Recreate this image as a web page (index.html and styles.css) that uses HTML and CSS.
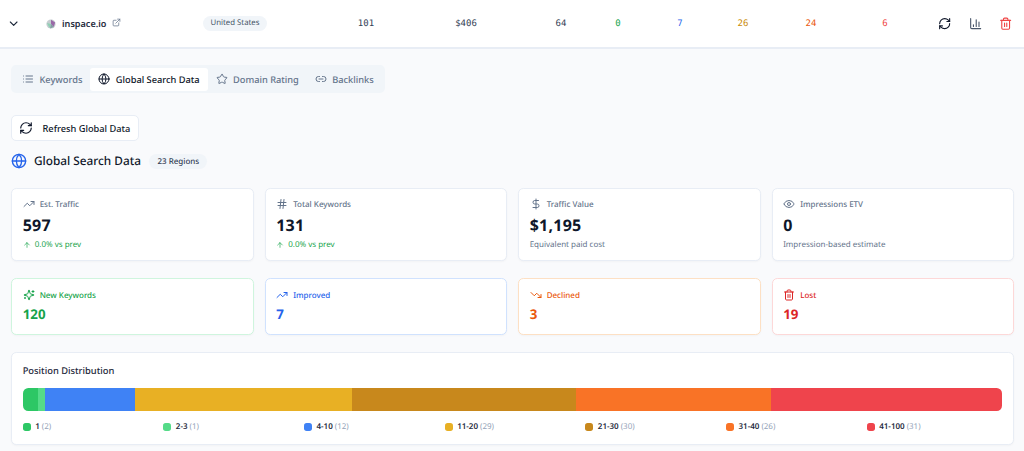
FILE: index.html
```html
<!DOCTYPE html>
<html>
<head>
    <title>inspace.io - Global Search Data</title>
    <link rel="stylesheet" href="styles.css">
</head>
<body>
    <svg class="sprite" xmlns="http://www.w3.org/2000/svg">
        <symbol id="i-chevron" viewBox="0 0 24 24"><path d="m6 9 6 6 6-6"/></symbol>
        <symbol id="i-external" viewBox="0 0 24 24"><path d="M15 3h6v6"/><path d="M10 14 21 3"/><path d="M18 13v6a2 2 0 0 1-2 2H5a2 2 0 0 1-2-2V8a2 2 0 0 1 2-2h6"/></symbol>
        <symbol id="i-refresh" viewBox="0 0 24 24"><path d="M3 12a9 9 0 0 1 9-9 9.75 9.75 0 0 1 6.74 2.74L21 8"/><path d="M21 3v5h-5"/><path d="M21 12a9 9 0 0 1-9 9 9.75 9.75 0 0 1-6.74-2.74L3 16"/><path d="M8 16H3v5"/></symbol>
        <symbol id="i-chart" viewBox="0 0 24 24"><path d="M3 3v16a2 2 0 0 0 2 2h16"/><path d="M18 17V9"/><path d="M13 17V5"/><path d="M8 17v-3"/></symbol>
        <symbol id="i-trash" viewBox="0 0 24 24"><path d="M3 6h18"/><path d="M19 6v14c0 1-1 2-2 2H7c-1 0-2-1-2-2V6"/><path d="M8 6V4c0-1 1-2 2-2h4c1 0 2 1 2 2v2"/><path d="M10 11v6"/><path d="M14 11v6"/></symbol>
        <symbol id="i-list" viewBox="0 0 24 24"><path d="M3 6h.01"/><path d="M3 12h.01"/><path d="M3 18h.01"/><path d="M8 6h13"/><path d="M8 12h13"/><path d="M8 18h13"/></symbol>
        <symbol id="i-globe" viewBox="0 0 24 24"><circle cx="12" cy="12" r="10"/><path d="M12 2a14.5 14.5 0 0 0 0 20 14.5 14.5 0 0 0 0-20"/><path d="M2 12h20"/></symbol>
        <symbol id="i-star" viewBox="0 0 24 24"><path d="M11.525 2.295a.53.53 0 0 1 .95 0l2.31 4.679a2.123 2.123 0 0 0 1.595 1.16l5.166.756a.53.53 0 0 1 .294.904l-3.736 3.638a2.123 2.123 0 0 0-.611 1.878l.882 5.14a.53.53 0 0 1-.771.56l-4.618-2.428a2.122 2.122 0 0 0-1.973 0L6.396 21.01a.53.53 0 0 1-.77-.56l.881-5.139a2.122 2.122 0 0 0-.611-1.879L2.16 9.795a.53.53 0 0 1 .294-.906l5.165-.755a2.122 2.122 0 0 0 1.597-1.16z"/></symbol>
        <symbol id="i-link" viewBox="0 0 24 24"><path d="M9 17H7A5 5 0 0 1 7 7h2"/><path d="M15 7h2a5 5 0 1 1 0 10h-2"/><path d="M8 12h8"/></symbol>
        <symbol id="i-up" viewBox="0 0 24 24"><path d="M16 7h6v6"/><path d="m22 7-8.5 8.5-5-5L2 17"/></symbol>
        <symbol id="i-down" viewBox="0 0 24 24"><path d="M16 17h6v-6"/><path d="m22 17-8.5-8.5-5 5L2 7"/></symbol>
        <symbol id="i-hash" viewBox="0 0 24 24"><path d="M4 9h16"/><path d="M4 15h16"/><path d="M10 3 8 21"/><path d="M16 3l-2 18"/></symbol>
        <symbol id="i-dollar" viewBox="0 0 24 24"><path d="M12 2v20"/><path d="M17 5H9.5a3.5 3.5 0 0 0 0 7h5a3.5 3.5 0 0 1 0 7H6"/></symbol>
        <symbol id="i-eye" viewBox="0 0 24 24"><path d="M2.062 12.348a1 1 0 0 1 0-.696 10.75 10.75 0 0 1 19.876 0 1 1 0 0 1 0 .696 10.75 10.75 0 0 1-19.876 0"/><circle cx="12" cy="12" r="3"/></symbol>
        <symbol id="i-sparkles" viewBox="0 0 24 24"><path d="M9.937 15.5A2 2 0 0 0 8.5 14.063l-6.135-1.582a.5.5 0 0 1 0-.962L8.5 9.936A2 2 0 0 0 9.937 8.5l1.582-6.135a.5.5 0 0 1 .963 0L14.063 8.5A2 2 0 0 0 15.5 9.937l6.135 1.581a.5.5 0 0 1 0 .964L15.5 14.063a2 2 0 0 0-1.437 1.437l-1.582 6.135a.5.5 0 0 1-.963 0z"/><path d="M20 3v4"/><path d="M22 5h-4"/><path d="M4 17v2"/><path d="M5 18H3"/></symbol>
        <symbol id="i-arrow" viewBox="0 0 24 24"><path d="m5 12 7-7 7 7"/><path d="M12 19V5"/></symbol>
    </svg>

    <div class="site-row">
        <div class="cell"><svg class="icon toggle"><use href="#i-chevron"/></svg></div>
        <div class="cell cell-left domain">
            <svg class="favicon" viewBox="0 0 10 10">
                <circle cx="5" cy="5" r="4.6" fill="#c5cdd0"/>
                <path d="M5 .8 9.2 3.4 7.6 8 5 5z" fill="#9a6aa8"/>
                <path d="M.9 4 5 5 3.6 9z" fill="#8fd0b4"/>
                <path d="M5 5 7.6 8 4 9.4z" fill="#7fa0a0"/>
            </svg>
            <span class="domain-name">inspace.io</span>
            <svg class="icon external"><use href="#i-external"/></svg>
        </div>
        <div class="cell cell-left country-cell"><span class="pill country">United States</span></div>
        <div class="cell mono">101</div>
        <div class="cell mono">$406</div>
        <div class="cell mono">64</div>
        <div class="cell mono c-green">0</div>
        <div class="cell mono c-blue">7</div>
        <div class="cell mono c-amber">26</div>
        <div class="cell mono c-orange">24</div>
        <div class="cell mono c-red">6</div>
        <div class="row-actions">
            <svg class="icon action"><use href="#i-refresh"/></svg>
            <svg class="icon action slate"><use href="#i-chart"/></svg>
            <svg class="icon action c-red"><use href="#i-trash"/></svg>
        </div>
    </div>

    <div class="content">
        <div class="tabs">
            <div class="tab"><svg class="icon"><use href="#i-list"/></svg>Keywords</div>
            <div class="tab active"><svg class="icon"><use href="#i-globe"/></svg>Global Search Data</div>
            <div class="tab"><svg class="icon"><use href="#i-star"/></svg>Domain Rating</div>
            <div class="tab"><svg class="icon"><use href="#i-link"/></svg>Backlinks</div>
        </div>

        <button class="refresh-button"><svg class="icon"><use href="#i-refresh"/></svg>Refresh Global Data</button>

        <div class="section-title">
            <svg class="icon globe"><use href="#i-globe"/></svg>
            <h2>Global Search Data</h2>
            <span class="pill regions">23 Regions</span>
        </div>

        <div class="stat-grid">
            <div class="stat-card">
                <div class="stat-label"><svg class="icon"><use href="#i-up"/></svg>Est. Traffic</div>
                <div class="stat-value">597</div>
                <div class="stat-note c-green"><svg class="icon note-arrow"><use href="#i-arrow"/></svg>0.0% vs prev</div>
            </div>
            <div class="stat-card">
                <div class="stat-label"><svg class="icon"><use href="#i-hash"/></svg>Total Keywords</div>
                <div class="stat-value">131</div>
                <div class="stat-note c-green"><svg class="icon note-arrow"><use href="#i-arrow"/></svg>0.0% vs prev</div>
            </div>
            <div class="stat-card">
                <div class="stat-label"><svg class="icon"><use href="#i-dollar"/></svg>Traffic Value</div>
                <div class="stat-value">$1,195</div>
                <div class="stat-note">Equivalent paid cost</div>
            </div>
            <div class="stat-card">
                <div class="stat-label"><svg class="icon"><use href="#i-eye"/></svg>Impressions ETV</div>
                <div class="stat-value">0</div>
                <div class="stat-note">Impression-based estimate</div>
            </div>
        </div>

        <div class="stat-grid change-grid">
            <div class="change-card card-green">
                <div class="stat-label"><svg class="icon"><use href="#i-sparkles"/></svg>New Keywords</div>
                <div class="change-value">120</div>
            </div>
            <div class="change-card card-blue">
                <div class="stat-label"><svg class="icon"><use href="#i-up"/></svg>Improved</div>
                <div class="change-value">7</div>
            </div>
            <div class="change-card card-orange">
                <div class="stat-label"><svg class="icon"><use href="#i-down"/></svg>Declined</div>
                <div class="change-value">3</div>
            </div>
            <div class="change-card card-red">
                <div class="stat-label"><svg class="icon"><use href="#i-trash"/></svg>Lost</div>
                <div class="change-value">19</div>
            </div>
        </div>

        <div class="distribution">
            <h3>Position Distribution</h3>
            <div class="dist-bar">
                <div class="seg seg-1" style="flex-grow: 2"></div>
                <div class="seg seg-2" style="flex-grow: 1"></div>
                <div class="seg seg-3" style="flex-grow: 12"></div>
                <div class="seg seg-4" style="flex-grow: 29"></div>
                <div class="seg seg-5" style="flex-grow: 30"></div>
                <div class="seg seg-6" style="flex-grow: 26"></div>
                <div class="seg seg-7" style="flex-grow: 31"></div>
            </div>
            <div class="legend">
                <div class="legend-item"><span class="dot seg-1"></span><b>1</b> <span class="count">(2)</span></div>
                <div class="legend-item"><span class="dot seg-2"></span><b>2-3</b> <span class="count">(1)</span></div>
                <div class="legend-item"><span class="dot seg-3"></span><b>4-10</b> <span class="count">(12)</span></div>
                <div class="legend-item"><span class="dot seg-4"></span><b>11-20</b> <span class="count">(29)</span></div>
                <div class="legend-item"><span class="dot seg-5"></span><b>21-30</b> <span class="count">(30)</span></div>
                <div class="legend-item"><span class="dot seg-6"></span><b>31-40</b> <span class="count">(26)</span></div>
                <div class="legend-item"><span class="dot seg-7"></span><b>41-100</b> <span class="count">(31)</span></div>
            </div>
        </div>
    </div>
</body>
</html>
```

FILE: styles.css
```css
html, body {
    margin: 0;
    height: 451px;
    overflow: hidden;
}

body {
    font-family: 'Noto Sans', sans-serif;
    background-color: #f9fafc;
    color: #0f172a;
    text-rendering: geometricPrecision;
}

.sprite {
    display: none;
}

.icon {
    width: 14px;
    height: 14px;
    flex: none;
    fill: none;
    stroke: currentColor;
    stroke-width: 2;
    stroke-linecap: round;
    stroke-linejoin: round;
}

.c-green { color: #16a34a; }
.c-blue { color: #2563eb; }
.c-amber { color: #ca8a04; }
.c-orange { color: #ea580c; }
.c-red { color: #ef4444; }

.pill {
    background-color: #f1f5f9;
    border-radius: 999px;
    font-weight: 500;
}

.site-row {
    display: grid;
    grid-template-columns: 28px 162px 141px 70px 130px 60px 54px 70px 56px 80px 68px 1fr;
    align-items: center;
    height: 47px;
    background-color: #ffffff;
    border-bottom: 2px solid #e8edf5;
}

.cell {
    display: flex;
    justify-content: center;
    align-items: center;
}

.cell-left {
    justify-content: flex-start;
}

.toggle {
    width: 13.33px;
    height: 13.33px;
    color: #1e293b;
}

.domain {
    padding-left: 18px;
}

.favicon {
    width: 10px;
    height: 10px;
    margin-right: 6px;
    filter: blur(0.4px);
}

.domain-name {
    font-size: 9.1px;
    font-weight: 600;
    color: #1e293b;
}

.external {
    width: 9px;
    height: 9px;
    margin-left: 6px;
    margin-top: -2px;
    color: #64748b;
}

.country-cell {
    padding-left: 13px;
}

.country {
    font-size: 7.8px;
    font-weight: 400;
    line-height: 11px;
    color: #475569;
    padding: 2px 7.5px;
}

.mono {
    font-family: 'DejaVu Sans Mono', monospace;
    font-size: 9px;
    color: #334155;
}

.mono.c-green { color: #16a34a; }
.mono.c-blue { color: #2563eb; }
.mono.c-amber { color: #ca8a04; }
.mono.c-orange { color: #ea580c; }
.mono.c-red { color: #ef4444; }

.row-actions {
    display: flex;
    justify-content: flex-end;
    gap: 17.17px;
    padding-right: 11.3px;
}

.action {
    width: 13.33px;
    height: 13.33px;
}

.slate {
    color: #475569;
}

.content {
    padding: 16px 10px 0 11px;
}

.tabs {
    display: inline-flex;
    align-items: center;
    height: 28px;
    padding: 0 3.2px;
    background-color: #f1f5f9;
    border-radius: 5px;
    box-sizing: border-box;
}

.tab {
    display: flex;
    align-items: center;
    gap: 5.33px;
    height: 23px;
    padding: 0 8px;
    font-size: 9.25px;
    font-weight: 500;
    color: #64748b;
    border-radius: 3px;
}

.tab .icon {
    width: 12px;
    height: 12px;
}

.tab.active {
    background-color: #ffffff;
    color: #0f172a;
}

.refresh-button {
    display: flex;
    align-items: center;
    gap: 9.5px;
    width: 128px;
    height: 26px;
    margin-top: 22px;
    padding: 0 7px;
    font-family: inherit;
    font-size: 9.25px;
    font-weight: 500;
    white-space: nowrap;
    color: #0f172a;
    background-color: #ffffff;
    border: 1px solid #e8edf5;
    border-radius: 5px;
}

.section-title {
    display: flex;
    align-items: center;
    margin-top: 9px;
    height: 22px;
}

.globe {
    color: #2563eb;
    width: 16px;
    height: 16px;
}

.section-title h2 {
    margin: 0 0 0 7px;
    font-size: 11.8px;
    font-weight: 500;
}

.regions {
    margin-left: 8.5px;
    padding: 2px 8px;
    font-size: 8px;
    line-height: 11px;
    color: #334155;
}

.stat-grid {
    display: grid;
    grid-template-columns: repeat(4, 1fr);
    gap: 11px;
    margin-top: 16px;
}

.stat-card,
.change-card {
    box-sizing: border-box;
    padding: 9px 10.67px;
    background-color: #ffffff;
    border: 1px solid #e8edf5;
    border-radius: 5.33px;
    box-shadow: 0 1px 2px rgba(15, 23, 42, 0.03);
}

.stat-card {
    height: 73px;
}

.change-grid {
    margin-top: 17px;
}

.change-card {
    height: 57px;
    padding-top: 10px;
}

.stat-label {
    display: flex;
    align-items: center;
    gap: 5px;
    font-size: 8px;
    font-weight: 500;
    color: #64748b;
    height: 12px;
}

.stat-label .icon {
    width: 12px;
    height: 12px;
}

.stat-value {
    margin-top: 4px;
    font-size: 16px;
    font-weight: 700;
    line-height: 22px;
    letter-spacing: 0.25px;
    color: #0f172a;
}

.stat-note {
    display: flex;
    align-items: center;
    gap: 4px;
    margin-top: 2px;
    font-size: 8px;
    line-height: 14px;
    color: #64748b;
}

.stat-note.c-green {
    color: #16a34a;
}

.note-arrow {
    width: 8px;
    height: 8px;
}

.change-value {
    margin-top: 3px;
    font-size: 13.33px;
    font-weight: 700;
    line-height: 20px;
}

.card-green { border-color: #cff5de; }
.card-green .stat-label { color: #16a34a; }
.card-green .change-value { color: #16a34a; }

.card-blue { border-color: #d0e2fe; }
.card-blue .stat-label { color: #2563eb; }
.card-blue .change-value { color: #2563eb; }

.card-orange { border-color: #fde0c4; }
.card-orange .stat-label { color: #ea580c; }
.card-orange .change-value { color: #ea580c; }

.card-red { border-color: #fdd8d8; }
.card-red .stat-label { color: #dc2626; }
.card-red .change-value { color: #dc2626; }

.distribution {
    box-sizing: border-box;
    height: 93px;
    margin-top: 17px;
    padding: 11px 10.67px;
    background-color: #ffffff;
    border: 1px solid #e8edf5;
    border-radius: 5.33px;
    box-shadow: 0 1px 2px rgba(15, 23, 42, 0.03);
}

.distribution h3 {
    margin: 0;
    font-size: 9.33px;
    font-weight: 500;
    line-height: 14px;
    color: #1e293b;
}

.dist-bar {
    display: flex;
    height: 23px;
    margin-top: 10px;
    border-radius: 5.33px;
    overflow: hidden;
}

.seg {
    flex-basis: 0;
}

.seg-1 { background-color: #2dc765; }
.seg-2 { background-color: #55db88; }
.seg-3 { background-color: #3f82f5; }
.seg-4 { background-color: #e8b024; }
.seg-5 { background-color: #c8881c; }
.seg-6 { background-color: #f97326; }
.seg-7 { background-color: #ef444c; }

.legend {
    display: grid;
    grid-template-columns: repeat(7, 1fr);
    column-gap: 5px;
    margin-top: 9px;
}

.legend-item {
    display: flex;
    align-items: center;
    gap: 2px;
    font-size: 8px;
    line-height: 14px;
    color: #1e293b;
}

.legend-item b {
    font-weight: 600;
}

.dot {
    width: 8px;
    height: 8px;
    margin-right: 2.5px;
    border-radius: 2.67px;
}

.count {
    color: #94a3b8;
}
```
